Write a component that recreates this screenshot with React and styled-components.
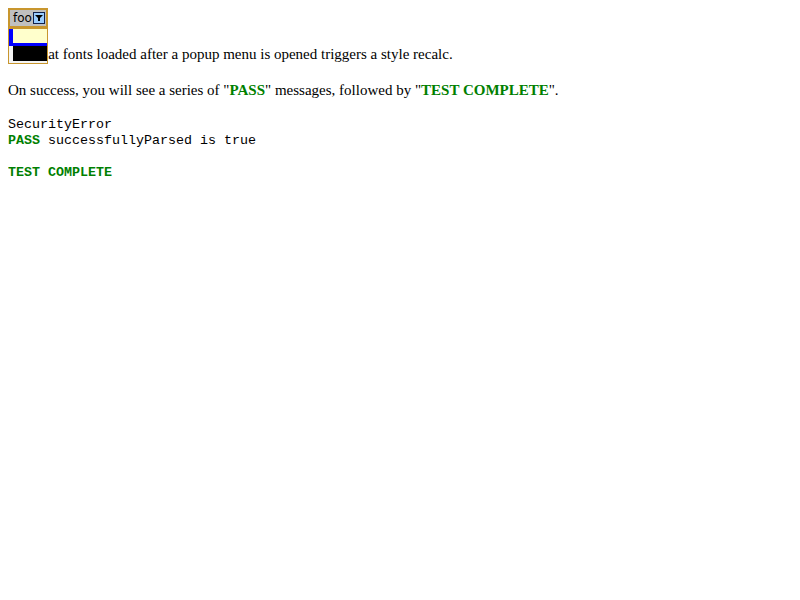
import React from 'react';
import styled, { createGlobalStyle } from 'styled-components';

const GlobalStyle = createGlobalStyle`
  body {
    margin: 8px;
    font-family: "Liberation Serif", "Times New Roman", serif;
    font-size: 15px;
    line-height: 20px;
    color: #000;
    background: #fff;
  }
`;

const SelectWrap = styled.div`
  position: relative;
  display: inline-block;
  vertical-align: top;
`;

const SelectBox = styled.div`
  box-sizing: border-box;
  width: 40px;
  height: 20px;
  display: flex;
  align-items: center;
  justify-content: space-between;
  padding: 0 1px 0 3px;
  border: 2px solid #c8962e;
  background: #c0c0c0;
  font-family: "DejaVu Sans", "Liberation Sans", sans-serif;
  font-size: 12px;
  line-height: 14px;
  color: #000;
`;

const ArrowButton = styled.span`
  box-sizing: border-box;
  width: 12px;
  height: 12px;
  display: flex;
  align-items: center;
  justify-content: center;
  border: 1px solid #10204a;
  background: #99ccff;

  svg {
    display: block;
  }
`;

const Popup = styled.div`
  position: absolute;
  top: 20px;
  left: 0;
  box-sizing: border-box;
  width: 40px;
  height: 36px;
  border: 1px solid #c8962e;
  background: #f4f4f4;
  display: flex;
  flex-direction: column;
`;

const MenuItem = styled.div`
  box-sizing: border-box;
  height: ${props => props.h}px;
  margin-left: ${props => (props.selected ? 0 : 4)}px;
  background: ${props => (props.selected ? '#ffffcc' : '#000')};
  border-left: ${props => (props.selected ? '4px solid #0000ff' : 'none')};
  border-bottom: ${props => (props.selected ? '3px solid #0000ff' : 'none')};
`;

const Description = styled.p`
  margin: 16px 0;
`;

const Green = styled.span`
  color: #008000;
  font-weight: bold;
`;

const Console = styled.div`
  margin-top: 17px;
  font-family: "Liberation Mono", "Courier New", monospace;
  font-size: 13.333px;
  line-height: 16px;
  white-space: pre;
`;

const Line = styled.div`
  min-height: 16px;
`;

export default function App() {
  return (
    <>
      <GlobalStyle />
      <SelectWrap>
        <SelectBox>
          <span>foo</span>
          <ArrowButton>
            <svg width="8" height="8" viewBox="0 0 8 8">
              <polygon points="0,1 8,1 5,4 5,7 3,7 3,4" fill="#000" />
            </svg>
          </ArrowButton>
        </SelectBox>
        <Popup>
          <MenuItem selected h={17} />
          <MenuItem h={15} />
        </Popup>
      </SelectWrap>
      <Description>
        Test that fonts loaded after a popup menu is opened triggers a style recalc.
      </Description>
      <Description>
        On success, you will see a series of "<Green>PASS</Green>" messages, followed by "<Green>TEST COMPLETE</Green>".
      </Description>
      <Console>
        <Line>SecurityError</Line>
        <Line><Green>PASS</Green> successfullyParsed is true</Line>
        <Line />
        <Line><Green>TEST COMPLETE</Green></Line>
      </Console>
    </>
  );
}
